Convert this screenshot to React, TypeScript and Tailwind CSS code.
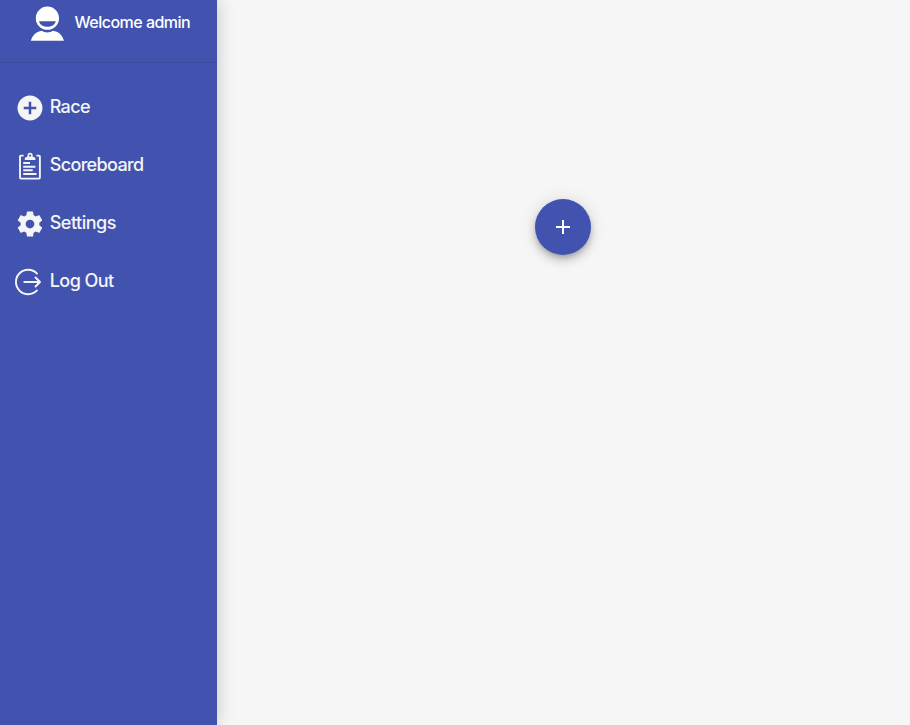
import type { ReactNode } from 'react';

function UserIcon() {
  return (
    <svg className="block shrink-0" width="34" height="35" viewBox="0 0 34 35" fill="#fff">
      <path fillRule="evenodd" d="M16.4 .6A11.6 11.6 0 0 1 16.4 23.8A11.6 11.6 0 0 1 16.4 .6ZM8 15.2C9.8 22.6 23 22.6 24.8 15.2Z" />
      <path d="M-.2 34.7C2 28.2 5.6 25.5 10.8 24.7C14.3 27 18.5 27 22 24.7C27.2 25.5 30.8 28.2 33 34.7Z" />
    </svg>
  );
}

function AddCircleIcon() {
  return (
    <svg className="block" width="30" height="30" viewBox="0 0 24 24" fill="#f5f5f5">
      <path d="M12 2C6.48 2 2 6.48 2 12s4.48 10 10 10 10-4.48 10-10S17.52 2 12 2zm5 11h-4v4h-2v-4H7v-2h4V7h2v4h4v2z" />
    </svg>
  );
}

function ClipboardIcon() {
  return (
    <svg className="block" width="30" height="30" viewBox="0 0 30 30" fill="none" stroke="#f5f5f5">
      <path d="M8.6 4.6H6Q5 4.6 5 5.6V26.6Q5 27.6 6 27.6H23.9Q24.9 27.6 24.9 26.6V5.6Q24.9 4.6 23.9 4.6H21.4" strokeWidth="1.9" />
      <path fill="#f5f5f5" stroke="none" fillRule="evenodd" d="M9.8 8.9V7.6Q9.8 6 11.4 6H11.9Q12.5 6 12.5 5.2V4.4A2.6 2.6 0 0 1 17.7 4.4V5.2Q17.7 6 18.3 6H18.8Q20.4 6 20.4 7.6V8.9ZM15.1 3.5A1.1 1.1 0 0 0 15.1 5.7A1.1 1.1 0 0 0 15.1 3.5Z" />
      <path d="M8.2 12H15M8.2 15.7H20.4M8.2 19.3H17.7M8.2 23H21.5" strokeWidth="2" />
    </svg>
  );
}

function GearIcon() {
  return (
    <svg className="block" width="30" height="30" viewBox="0 0 24 24" fill="#f5f5f5">
      <path d="M19.43 12.98c.04-.32.07-.64.07-.98s-.03-.66-.07-.98l2.11-1.65c.19-.15.24-.42.12-.64l-2-3.46c-.12-.22-.39-.3-.61-.22l-2.49 1c-.52-.4-1.08-.73-1.69-.98l-.38-2.65C14.46 2.18 14.25 2 14 2h-4c-.25 0-.46.18-.49.42l-.38 2.65c-.61.25-1.17.59-1.69.98l-2.49-1c-.23-.09-.49 0-.61.22l-2 3.46c-.13.22-.07.49.12.64l2.11 1.65c-.04.32-.07.65-.07.98s.03.66.07.98l-2.11 1.65c-.19.15-.24.42-.12.64l2 3.46c.12.22.39.3.61.22l2.49-1c.52.4 1.08.73 1.69.98l.38 2.65c.03.24.24.42.49.42h4c.25 0 .46-.18.49-.42l.38-2.65c.61-.25 1.17-.59 1.69-.98l2.49 1c.23.09.49 0 .61-.22l2-3.46c.12-.22.07-.49-.12-.64l-2.11-1.65zM12 15.5c-1.93 0-3.5-1.57-3.5-3.5s1.57-3.5 3.5-3.5 3.5 1.57 3.5 3.5-1.57 3.5-3.5 3.5z" />
    </svg>
  );
}

function LogOutIcon() {
  return (
    <svg className="block" width="30" height="30" viewBox="0 0 30 30" fill="none" stroke="#f5f5f5" strokeWidth="1.9" strokeLinecap="round" strokeLinejoin="round">
      <path d="M22 6.6A12.2 12.2 0 1 0 22 23.4" />
      <path d="M9.3 15H24.7M20.5 10.5L25 15L20.5 19.5" />
    </svg>
  );
}

function NavItem({ icon, label, spacing }: { icon: ReactNode; label: string; spacing: string }) {
  return (
    <a className="flex h-[58px] items-center gap-[5px] pl-[14.7px] text-[#f5f5f5]">
      {icon}
      <span className={`pb-0.5 text-lg font-medium ${spacing}`}>{label}</span>
    </a>
  );
}

export default function App() {
  return (
    <div className="flex h-[725px] w-[910px] overflow-hidden bg-[#f6f6f6] font-['Inter','Liberation_Sans',sans-serif]">
      <aside className="z-10 w-[217px] shrink-0 bg-[#4153af] shadow-[0_0_18px_rgba(0,0,0,0.2)]">
        <header className="flex h-[63px] gap-[10px] border-b border-[#3c4c9f] pl-[30.6px] pt-[6px] text-white">
          <UserIcon />
          <span className="pt-1 text-base font-medium tracking-[-0.52px]">Welcome admin</span>
        </header>
        <nav className="pt-4">
          <NavItem icon={<AddCircleIcon />} label="Race" spacing="tracking-[-0.65px]" />
          <NavItem icon={<ClipboardIcon />} label="Scoreboard" spacing="tracking-[-0.65px]" />
          <NavItem icon={<GearIcon />} label="Settings" spacing="tracking-[-0.5px]" />
          <NavItem icon={<LogOutIcon />} label="Log Out" spacing="tracking-[-0.55px]" />
        </nav>
      </aside>
      <main className="flex flex-1 items-start justify-center pr-px pt-[199px]">
        <button className="flex size-14 items-center justify-center rounded-full bg-[#4153af] shadow-[0_3px_5px_-1px_rgba(0,0,0,0.2),0_6px_10px_rgba(0,0,0,0.14),0_1px_18px_rgba(0,0,0,0.12)]">
          <svg width="24" height="24" viewBox="0 0 24 24" fill="#fff">
            <path d="M19 13h-6v6h-2v-6H5v-2h6V5h2v6h6v2z" />
          </svg>
        </button>
      </main>
    </div>
  );
}
